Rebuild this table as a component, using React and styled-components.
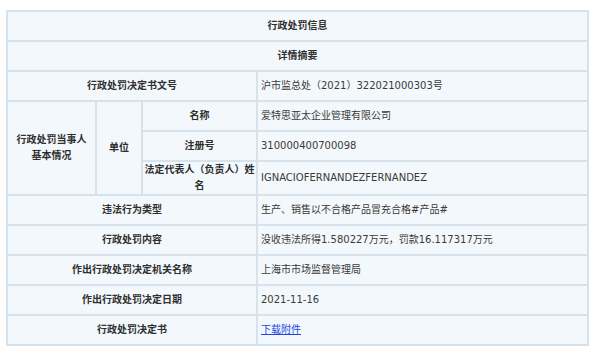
import React from "react";
import styled, { createGlobalStyle } from "styled-components";

const GlobalStyle = createGlobalStyle`
  html, body {
    margin: 0;
    background: #fff;
  }
`;

const rows = [
  { label: "违法行为类型", value: "生产、销售以不合格产品冒充合格#产品#" },
  { label: "行政处罚内容", value: "没收违法所得1.580227万元，罚款16.117317万元" },
  { label: "作出行政处罚决定机关名称", value: "上海市市场监督管理局" },
  { label: "作出行政处罚决定日期", value: "2021-11-16" },
];

export default function App() {
  return (
    <Wrapper>
      <GlobalStyle />
      <Table>
        <colgroup>
          <col style={{ width: 89 }} />
          <col style={{ width: 46 }} />
          <col style={{ width: 115 }} />
          <col />
        </colgroup>
        <tbody>
          <tr>
            <Label colSpan={4}>行政处罚信息</Label>
          </tr>
          <tr>
            <Label colSpan={4}>详情摘要</Label>
          </tr>
          <tr>
            <Label colSpan={3}>行政处罚决定书文号</Label>
            <Value>沪市监总处（2021）322021000303号</Value>
          </tr>
          <tr>
            <Label rowSpan={3}>
              行政处罚当事人
              <br />
              基本情况
            </Label>
            <Label rowSpan={3}>单位</Label>
            <Label>名称</Label>
            <Value>爱特思亚太企业管理有限公司</Value>
          </tr>
          <tr>
            <Label>注册号</Label>
            <Value>310000400700098</Value>
          </tr>
          <tr>
            <Label $tight>法定代表人（负责人）姓名</Label>
            <Value>IGNACIOFERNANDEZFERNANDEZ</Value>
          </tr>
          {rows.map((r) => (
            <tr key={r.label}>
              <Label colSpan={3}>{r.label}</Label>
              <Value>{r.value}</Value>
            </tr>
          ))}
          <tr>
            <Label colSpan={3}>行政处罚决定书</Label>
            <Value>
              <Link href="#">下载附件</Link>
            </Value>
          </tr>
        </tbody>
      </Table>
    </Wrapper>
  );
}

const Wrapper = styled.div`
  padding: 10px 8px 0 6px;
  font-family: "DejaVu Sans", "Noto Sans CJK SC", sans-serif;
  font-size: 10px;
  color: #333;
`;

const Table = styled.table`
  width: 583px;
  border-collapse: collapse;
  table-layout: fixed;
  background: #f3f8fc;
  border: 2px solid #d6e3ec;
`;

const Cell = styled.td`
  height: 28px;
  padding: 0 3px;
  line-height: 16px;
  border: 2px solid #d6e3ec;
  vertical-align: middle;
`;

const Label = styled(Cell)`
  padding: ${(p) => (p.$tight ? "0" : "0 3px")};
  text-align: center;
  font-weight: 600;
  color: #2f2f2f;
`;

const Value = styled(Cell)`
  text-align: left;
  font-weight: 400;
  color: #3a3a3a;
`;

const Link = styled.a`
  color: #1f47e0;
  text-decoration: underline;
`;
